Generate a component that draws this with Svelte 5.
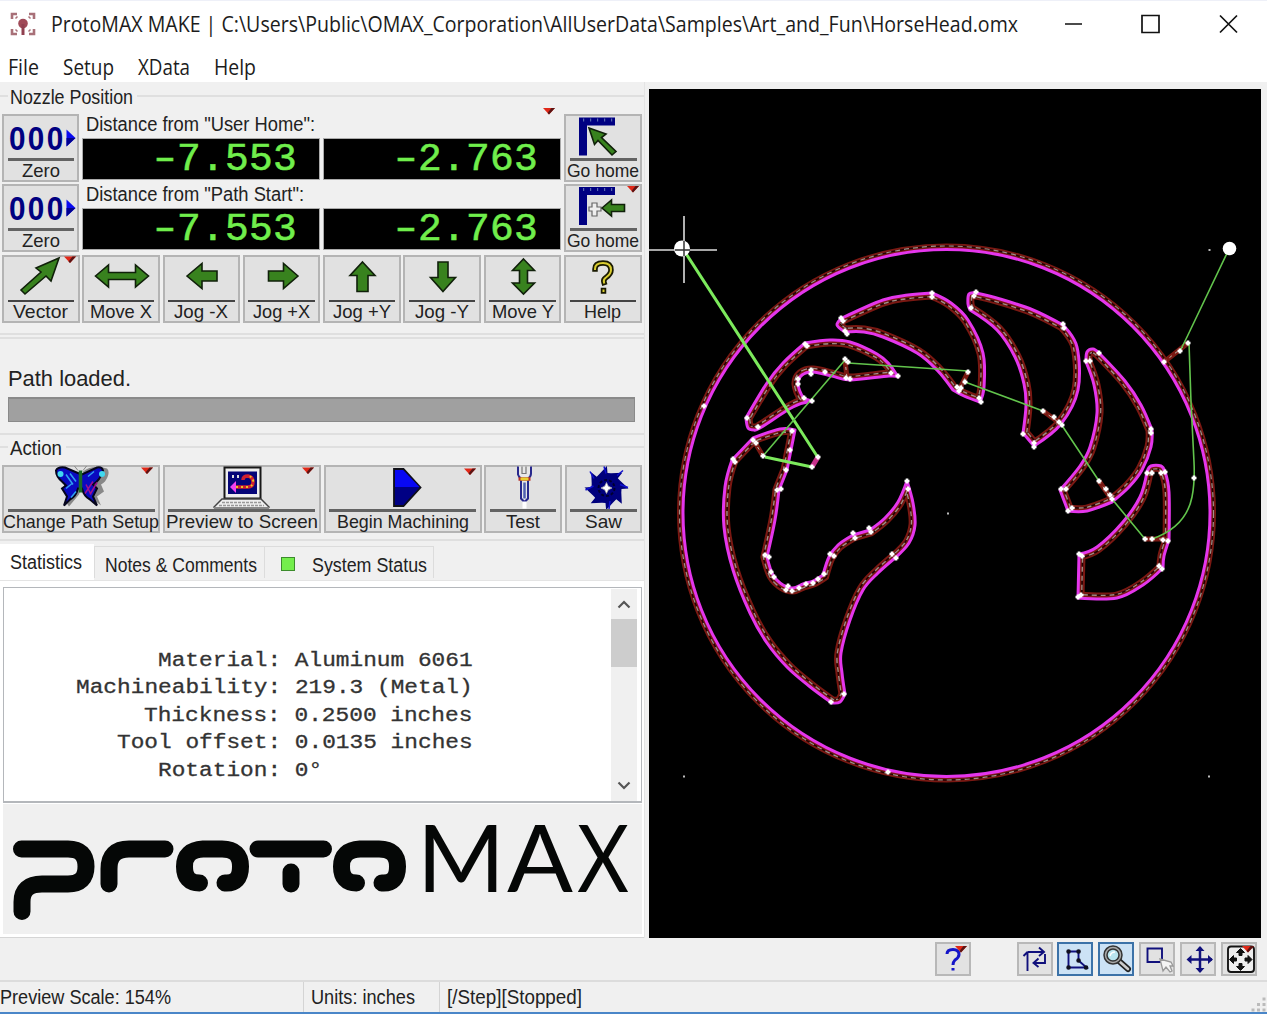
<script>
  const menus = [['File', 31], ['Setup', 51], ['XData', 52], ['Help', 42]];

  const jogs = [
    { id: 'vector', text: 'Vector', w: 55, x: 2 },
    { id: 'movex', text: 'Move X', w: 62, x: 82 },
    { id: 'left', text: 'Jog -X', w: 54, x: 163 },
    { id: 'right', text: 'Jog +X', w: 57, x: 243 },
    { id: 'up', text: 'Jog +Y', w: 58, x: 323 },
    { id: 'down', text: 'Jog -Y', w: 54, x: 403 },
    { id: 'movey', text: 'Move Y', w: 62, x: 484 },
    { id: 'help', text: 'Help', w: 37, x: 564 }
  ];

  const actions = [
    { id: 'path', text: 'Change Path Setup', w: 156, x: 2, bw: 158 },
    { id: 'preview', text: 'Preview to Screen', w: 152, x: 163, bw: 158 },
    { id: 'begin', text: 'Begin Machining', w: 132, x: 323, bw: 158 },
    { id: 'test', text: 'Test', w: 34, x: 484, bw: 77.5 },
    { id: 'saw', text: 'Saw', w: 37, x: 564, bw: 77.5 }
  ];

  const stats = [
    ['Material: Aluminum 6061', 6],
    ['Machineability: 219.3 (Metal)', 0],
    ['Thickness: 0.2500 inches', 5],
    ['Tool offset: 0.0135 inches', 3],
    ['Rotation: 0°', 6]
  ];

  const tools = [
    { id: 'turn', x: 1017 },
    { id: 'shape', x: 1058, on: true },
    { id: 'zoom', x: 1098, on: true },
    { id: 'select', x: 1139 },
    { id: 'pan', x: 1180 },
    { id: 'fit', x: 1221 }
  ];

  // Eight hooked teeth around the hub of the saw blade.
  const blade = Array.from({ length: 8 }, (_, i) => {
    const at = (r, deg) => {
      const a = ((i * 45 + deg) * Math.PI) / 180;
      return `${(605.5 + r * Math.cos(a)).toFixed(1)},${(487.5 + r * Math.sin(a)).toFixed(1)}`;
    };
    return `${at(15.5, -28)} ${at(22, 1)} ${at(15, 4)}`;
  }).join(' ');

  // Cut outlines: x, y and an optional 1 for a sharp corner.
  const parts = [
    [[805,343,1],[830,340],[850,342],[877,354],[889,364],[898,377,1],[889,376],[850,380],[832,376],[813,372],[802,375],[798,384],[803,397],[812,401,1],[793,407],[760,428],[754,430],[748,428],[746,418,1],[767,383],[783,363]],
    [[932,293,1],[908,295],[883,300],[842,318,1],[837,325],[845,332,1],[864,332],[883,337],[917,353],[937,370],[953,390,1],[964,396],[980,402,1],[984,387],[983,353],[968,320],[951,303]],
    [[976,293,1],[969,294],[968,304],[970,310,1],[997,330],[1015,357],[1024,384],[1026,405],[1023,433,1],[1034,446,1],[1061,424],[1078,390],[1077,347],[1063,325,1],[1033,310],[1000,299]],
    [[1099,353,1],[1093,349],[1087,352],[1086,362,1],[1094,385],[1097,413],[1090,447],[1080,466],[1060,490,1],[1068,511,1],[1087,511],[1112,502,1],[1129,487],[1142,470],[1151,447],[1152,430,1],[1141,405],[1125,381]],
    [[1147,472,1],[1151,466],[1161,466],[1165,472,1],[1169,492],[1169,540,1],[1164,556],[1163,568,1],[1143,585],[1117,598],[1078,598,1],[1079,554,1],[1097,547],[1123,522],[1140,497]],
    [[795,430,1],[780,429],[753,438,1],[732,460,1],[725,487],[724,527],[733,570],[750,613],[767,643],[787,667],[809,686],[832,703,1],[840,702],[845,694,1],[842,673],[841,653],[850,620],[863,590],[878,573],[895,558,1],[909,543],[915,525],[913,503],[907,481,1],[898,502],[885,518],[870,530,1],[853,535,1],[838,545],[829,557],[823,575,1],[813,581],[803,584],[793,588],[783,585],[773,575],[767,557,1],[775,520],[779,490,1],[787,470,1]]
  ];

  const nodes = [
    [805,344],[807,346],[898,376],[891,373],[846,378],[850,379],[825,372],[811,370],[811,374],[798,379],[798,384],[804,398],[812,401],[747,418],[758,427],[845,359],[848,362],
    [932,293],[932,297],[841,318],[843,321],[845,331],[847,334],[957,387],[959,391],[961,388],[979,398],[981,402],[968,372],[965,382],
    [976,292],[974,296],[971,308],[1063,324],[1064,328],[1043,411],[1054,417],[1059,422],[1062,425],[1023,434],[1034,443],[1034,447],
    [1099,353],[1086,361],[1090,361],[1151,429],[1151,433],[1061,489],[1066,489],[1068,511],[1072,508],[1099,481],[1106,489],[1110,495],[1112,499],
    [1147,473],[1152,473],[1161,473],[1165,472],[1145,539],[1152,539],[1163,540],[1168,541],[1159,566],[1162,569],[1079,554],[1082,556],[1078,597],[1081,595],
    [753,440],[756,443],[733,459],[735,462],[763,456],[792,431],[790,450],[786,470],[777,490],[781,489],[818,457],[812,467],[765,555],[769,557],[771,572],[774,577],
    [786,590],[788,586],[792,591],[799,588],[806,584],[813,583],[818,579],[824,574],[830,554],[834,556],[853,533],[855,538],[869,528],[871,532],[907,481],[908,489],[892,554],[896,558],[831,702],[844,694],
    [888,772],[704,406],[1164,362],[1180,351],[1188,343],[1194,478]
  ];

  function smooth(pts) {
    const n = pts.length;
    const tan = (i) => {
      const p = pts[(i + n) % n];
      if (p[2]) return [0, 0];
      const a = pts[(i - 1 + n) % n];
      const b = pts[(i + 1) % n];
      return [(b[0] - a[0]) / 6, (b[1] - a[1]) / 6];
    };
    let d = `M${pts[0][0]} ${pts[0][1]}`;
    for (let i = 0; i < n; i++) {
      const p = pts[i];
      const q = pts[(i + 1) % n];
      const u = tan(i);
      const v = tan((i + 1) % n);
      d += `C${p[0] + u[0]} ${p[1] + u[1]} ${q[0] - v[0]} ${q[1] - v[1]} ${q[0]} ${q[1]}`;
    }
    return d + 'Z';
  }
  const outlines = parts.map(smooth);
</script>

{#snippet label(text, w, size = 19, cls = 'ui')}
  <svg class="label {cls}" width={w} height="20"><text x="0" y="16" textLength={w} lengthAdjust="spacingAndGlyphs" font-size={size}>{text}</text></svg>
{/snippet}

{#snippet marker(x, y)}
  <path d="M{x} {y}h12l-6 6.5z" fill="#e02818" /><path d="M{x + 12} {y}l-6 6.5l-1.5 -1.5l4 -5z" fill="#5a1414" />
{/snippet}

{#snippet ruler(y)}
  <path d="M579 {y}h36v8h-28v30h-8z" fill="#000082" />
  <path d="M583 {y + 2.5}h30" stroke="#5868b0" stroke-width="3" stroke-dasharray="1.2 5.8" />
{/snippet}

{#snippet zeroButton()}
  <button class="cell">
    <svg class="zero" width="76" height="44">
      <text x="6.6 27.6 48.6" y="35" transform="scale(.9 1)">000</text>
      <path d="M63.500 14.500l9 8.500l-9 8.500z" fill="#0a0af0" /><path d="M63.500 23h9l-9 8.500z" fill="#000090" />
    </svg>
    <i class="rule thick"></i>
    {@render label('Zero', 38)}
  </button>
{/snippet}

{#snippet readouts(title, w)}
  <div class="readouts">
    <div class="caption">{@render label(title, w, 19.5, 'plain')}</div>
    <div class="pair">
      <div class="led"><span class="sign">-</span>7.553</div>
      <div class="led"><span class="sign">-</span>2.763</div>
    </div>
  </div>
{/snippet}

<div class="window">
  <header class="title">
    <svg class="app-icon" width="26" height="26" viewBox="10 11 26 26">
      <g fill="none" stroke="#a87078" stroke-width="2.600">
        <path d="M12 19v-5h5M29 14h5v5M34 29v5h-5M17 34h-5v-5" />
        <path d="M15.500 18.500l2-2M28.500 16.500l2 2M30.500 29.500l-2 2M17.500 31.500l-2-2" stroke-width="1.500" />
      </g>
      <circle cx="23" cy="23.500" r="4.800" fill="#a04a58" /><path d="M23 24v11" stroke="#904050" stroke-width="3" />
    </svg>
    {@render label('ProtoMAX MAKE | C:\\Users\\Public\\OMAX_Corporation\\AllUserData\\Samples\\Art_and_Fun\\HorseHead.omx', 967, 21.5, 'segoe')}
    <svg class="controls" width="190" height="40" viewBox="1058 5 190 40" fill="none" stroke="#111" stroke-width="1.700">
      <path d="M1065 24h17M1142 15.500h17v17h-17zM1220 15.500l17 17M1237 15.500l-17 17" />
    </svg>
  </header>
  <nav>
    {#each menus as [name, w]}{@render label(name, w, 21.5, 'segoe')}{/each}
  </nav>

  <main>
    <section class="side">
      <div class="legend"><i class="stub"></i>{@render label('Nozzle Position', 123, 20, 'plain')}<i class="line"></i></div>
      <div class="positions">
        <svg class="corner-mark" width="14" height="8" viewBox="542 107 14 8">{@render marker(543, 108)}</svg>
        {@render zeroButton()}
        {@render readouts('Distance from "User Home":', 229)}
        <button class="cell">
          <svg width="76" height="44" viewBox="565 115 76 44">
            {@render ruler(117.5)}
            <path d="M589 128l17 6-4.500 3.500 14.500 14-4 3.500-14-14.500-3.500 4z" class="arrow" />
          </svg>
          <i class="rule thick"></i>{@render label('Go home', 72)}
        </button>
        {@render zeroButton()}
        {@render readouts('Distance from "Path Start":', 218)}
        <button class="cell">
          <svg width="76" height="44" viewBox="565 186 76 44">
            {@render ruler(188)}
            <path d="M592 204h5v4h4v4h-4v5h-5v-5h-3v-4h3z" fill="#eee" stroke="#666" stroke-width="1.200" />
            <path d="M602 209l9.500-8v4.500h13v7h-13v4.500z" class="arrow" />
            {@render marker(627, 187)}
          </svg>
          <i class="rule thick"></i>{@render label('Go home', 72)}
        </button>
      </div>
      <div class="buttons jogs">
        {#each jogs as b}
          <button class="cell">
            <svg width="76" height="44" viewBox="{b.x + 1} 256 76 44">
              {#if b.id === 'vector'}
                <path d="M59 258l-8 23-5-5-21 18-4-4 20-18-5-4z" class="arrow" />
                {@render marker(64, 256.500)}
              {:else if b.id === 'movex'}
                <path d="M95.500 276l13-11v7.500h27v-7.500l13 11-13 11v-7.500h-27v7.500z" class="arrow" />
              {:else if b.id === 'left'}
                <path d="M188 276l15-12.500v7.500h15v10h-15v7.500z" class="arrow" />
              {:else if b.id === 'right'}
                <path d="M298 276l-14.500-12.500v7.500h-15v10h15v7.500z" class="arrow" />
              {:else if b.id === 'up'}
                <path d="M362.500 262l12.500 13.500h-7v16h-11v-16h-7z" class="arrow" />
              {:else if b.id === 'down'}
                <path d="M443 291.500l12.500-14h-7.500v-15.500h-10v15.500h-7.500z" class="arrow" />
              {:else if b.id === 'movey'}
                <path d="M523.500 259l11 11.500h-7v12.500h7l-11 11-11-11h7v-12.500h-7z" class="arrow" />
              {:else}
                <g fill="none" stroke-linecap="square">
                  <path d="M595 269q0-6 8-6t8 7q0 4-5 7.500-3 2-2 5M603.500 290.500v.5" stroke="#1a1a00" stroke-width="5.500" />
                  <path d="M595 269q0-6 8-6t8 7q0 4-5 7.500-3 2-2 5M603.500 290.500v.5" stroke="#d8cc30" stroke-width="2" />
                </g>
              {/if}
            </svg>
            <i class="rule"></i>{@render label(b.text, b.w)}
          </button>
        {/each}
      </div>
      <hr class="first" /><hr class="second-line" />
      <div class="message">{@render label('Path loaded.', 123, 21.5)}</div>
      <div class="progress"></div>
      <hr class="third" />
      <div class="legend action"><i class="stub"></i>{@render label('Action', 52, 20, 'plain')}<i class="line"></i></div>
      <div class="buttons">
        {#each actions as b}
          <button class="cell" style:width="{b.bw}px">
            <svg width={b.bw - 2} height="44" viewBox="{b.x + 1} 465.500 {b.bw - 2} 44">
              {#if b.id === 'path'}
                <path d="M83 471q9-7 24-3q4 4-2 13q-2 2-4 3l3 7-7 5 4 9-10-8-5-8M82 485l-3 9-10 12-2-3 5-7-8-8v-6" fill="#888" />
                <path d="M79 473L65 467q-7-1-9 3 0 6 6 11l4 4-4 3 5 8-3 9 6-6q6-3 8-11h4q2 8 8 11l7 6-4-9 4-8-4-4q7-4 10-14-1-4-6-3l-15 7z" fill="#0a0ac0" stroke="#05051c" stroke-width="2" />
                <path d="M66 474l7 10M70 473l6 8M88 476l6-5M66 488l6-5M71 497l5-6" stroke="#30a0f0" stroke-width="1.500" />
                <circle cx="60.500" cy="473.500" r="3" fill="#40d8f0" /><circle cx="102" cy="473.500" r="3" fill="#40d8f0" />
                <path d="M85 493l8-12M90 494l7-12M86 484l5 10" stroke="#a01090" stroke-width="1.500" />
                <path d="M80.500 470v22" stroke="#1c6c28" stroke-width="3.500" /><path d="M78 470l-4-5M83 470l4-5" stroke="#888" stroke-width="1" />
                {@render marker(141, 467)}
              {:else if b.id === 'preview'}
                <path d="M224.500 467h36v31h-36z" fill="#eee" stroke="#181818" stroke-width="2" />
                <path d="M228 471h29v22.500h-29z" fill="#050578" />
                <path d="M234 486.500h14q5 0 5-5t-5-6q-5 0-5 4" fill="none" stroke="#d02030" stroke-width="3.500" />
                <path d="M236 486.500h12q4 0 5-5t-5-6" fill="none" stroke="#e8c820" stroke-width="2" stroke-dasharray="2 3" />
                <path d="M230 486.500l6-6v12z" fill="#f040f0" /><path d="M232 476h2M237 476h2" stroke="#ddd" stroke-width="3" />
                <path d="M222 498.500h39l8 8-2 3h-51l-2-3z" fill="#eee" stroke="#444" stroke-width="1.500" />
                <path d="M222 502h39M219 505h45" stroke="#999" stroke-width="1.500" stroke-dasharray="3 1" /><path d="M214 508h55" stroke="#888" stroke-width="3" />
                {@render marker(302, 467)}
              {:else if b.id === 'begin'}
                <path d="M393 468.500h9.500l17 18.500-17 18.500h-9.500z" fill="#000084" stroke="#101018" stroke-width="1.800" />
                <path d="M394 469.500h8l16.500 17h-24.500z" fill="#0808f4" />
                {@render marker(463, 468)}
              {:else if b.id === 'test'}
                <path d="M518 466v8q1 3 3 4v20l3.500 3.500 3.500-3.500v-20q3-2 3-5v-7" fill="#e8e8e8" stroke="#28288c" stroke-width="2" />
                <path d="M522 466v7h4v-7" fill="none" stroke="#777" stroke-width="1.200" /><path d="M524.500 482v16" stroke="#5060b0" stroke-width="2.500" />
                <path d="M518.500 478.500h12" stroke="#b83028" stroke-width="3.500" /><path d="M520.500 478.500h8" stroke="#e8d030" stroke-width="3" /><path d="M524.500 501v7" stroke="#fff" stroke-width="4" />
              {:else}
                <polygon points={blade} fill="#00007c" />
                <path d="M589 471l4 7M584.500 489.500l8 -4M622 470l-6 5M627 487l-8-3M608 508.500l1-8M603 466l2 7" stroke="#1010d0" stroke-width="1.500" />
                <circle cx="605.500" cy="487.500" r="8" fill="none" stroke="#000030" stroke-width="2" stroke-dasharray="3 2" />
                <path d="M605.500 482l1.800 3.700 3.700 1.800-3.700 1.800-1.800 3.700-1.800-3.700-3.700-1.800 3.700-1.800z" fill="#fff" stroke="#aaa" stroke-width=".8" />
              {/if}
            </svg>
            <i class="rule thick"></i>{@render label(b.text, b.w, 18.5)}
          </button>
        {/each}
      </div>
      <hr class="fourth" />
      <div class="tabs">
        <div class="tab active">{@render label('Statistics', 72, 19.5, 'plain')}</div>
        <div class="tab notes">{@render label('Notes & Comments', 152, 19.5, 'plain')}</div>
        <div class="tab system"><i class="lamp"></i>{@render label('System Status', 115, 19.5, 'plain')}</div>
      </div>
      <div class="sheet">
        <div class="memo">
          <div class="lines">
            {#each stats as [line, indent]}
              <div class="stat" style:padding-left="{indent * 13.68}px">{@render label(line, line.length * 13.68, 20.5, 'mono')}</div>
            {/each}
          </div>
          <div class="scroll">
            <svg width="26" height="30" viewBox="0 0 26 30"><path d="M7.500 18.500l5.500-5.500 5.500 5.500" /></svg>
            <div class="thumb"></div>
            <svg class="down" width="26" height="30" viewBox="0 0 26 30"><path d="M7.500 11.500l5.500 5.500 5.500-5.500" /></svg>
          </div>
        </div>
        <div class="logo">
          <svg width="639" height="129" viewBox="3 804 639 129">
            <g fill="none" stroke="#050706" stroke-width="17" stroke-linecap="round" stroke-linejoin="round">
              <path d="M21.500 849H68Q86 849 86 866.500T68 884H42Q22 884 22 902V911.500" />
              <path d="M109 884V869Q109 849 129 849H165" />
              {#each [0, 157] as dx}
                <path d="M{199.5 + dx} 883Q{184.5 + dx} 883 {184.5 + dx} 866.500T{203 + dx} 849H{222 + dx}Q{240.5 + dx} 849 {240.5 + dx} 866.500T{225 + dx} 883" />
              {/each}
              <path d="M258 849H323.500M291 872V884" />
            </g>
            <g class="max">
              <text x="417" y="892" textLength="88" lengthAdjust="spacingAndGlyphs">M</text>
              <text x="507" y="892" textLength="66" lengthAdjust="spacingAndGlyphs">A</text>
              <text x="577" y="892" textLength="52" lengthAdjust="spacingAndGlyphs">X</text>
            </g>
          </svg>
        </div>
      </div>
    </section>

    <svg class="canvas" width="612" height="849" viewBox="649 89 612 849">
      <defs>
        {#each outlines as d, i}<clipPath id="part{i}"><path {d} /></clipPath>{/each}
      </defs>
      <g fill="none">
        <circle cx="946.500" cy="513" r="267" stroke="#7a1812" stroke-width="5" />
        <circle cx="946.500" cy="513" r="267" stroke="#200404" stroke-width="1.400" />
        <circle cx="946.500" cy="513" r="267" stroke="#a09088" stroke-width="1.200" stroke-dasharray="5 4" />
        <circle cx="946.500" cy="513" r="263.500" stroke="#e436ec" stroke-width="3" />
        {#each outlines as d, i}
          <g clip-path="url(#part{i})">
            <path {d} stroke="#7a1812" stroke-width="13" />
            <path {d} stroke="#200404" stroke-width="9" />
            <path {d} stroke="#a09088" stroke-width="8.600" stroke-dasharray="5 4" />
            <path {d} stroke="#7a1812" stroke-width="6" />
          </g>
          <path {d} stroke="#e436ec" stroke-width="3" stroke-linejoin="round" />
        {/each}
        <path d="M754 441l9 15M845 360l2 18M968 372l-9 18M1043 411l18 13M1099 481l13 19M1145 539h22M1164 362l24-19" stroke="#7a1812" stroke-width="5" />
        <path d="M754 441l9 15M845 360l2 18M968 372l-9 18M1043 411l18 13M1099 481l13 19M1145 539h22M1164 362l24-19" stroke="#bba" stroke-width="1" stroke-dasharray="3 4" />
        <path d="M818 457l-6 10" stroke="#c8308c" stroke-width="5" />
        <path d="M683 249l134 207M765 457l47 10" stroke="#7cea5c" stroke-width="3" />
        <path d="M763 456l82-96M848 363l120 8M965 382l78 29M1061 424l38 57M1112 499l33 40M1152 539q34-12 40-42q3-15 2-35l-3-60-2-59M1180 351l7-14 42-88" stroke="#62c44c" stroke-width="1.600" />
      </g>
      {#each nodes as [x, y]}<path d="M{x - 2.5} {y}h5M{x} {y - 2.5}v5" class="node" />{/each}
      <circle cx="682" cy="248.500" r="8" fill="#fff" /><circle cx="1229.500" cy="248.500" r="6.800" fill="#fff" />
      <path d="M649 250h68M684 216v67" stroke="#ddd" stroke-width="1.600" /><path d="M675 250h15M684 241v15" stroke="#333" stroke-width="1.400" />
      <path d="M1208.500 250h2M683 776.500h2M1208 776.500h2M947 513.500h2" stroke="#bbb" stroke-width="2" />
    </svg>
  </main>

  <div class="toolbar">
    <button class="tool ask">
      <svg width="34" height="32" viewBox="936 943 34 32">
        <path d="M947 954q0-4.500 6-4.500t6 5q0 3-4 5.500-2 2-2 5M953 968v2.500" fill="none" stroke="#1414c8" stroke-width="3" />{@render marker(955, 946)}
      </svg>
    </button>
    {#each tools as t}
      <button class="tool" class:on={t.on}>
        <svg width="34" height="32" viewBox="{t.x + 1} 943 34 32" fill="none" stroke="#10107c" stroke-width="1.900">
          {#if t.id === 'turn'}
            <path d="M1027.500 971v-19M1023.500 956l4-4M1027.500 952h16M1039 947.500l5 4.500-5 4M1045 954v9h-11M1038.500 958.500l-5 4.500 5 4" />
          {:else if t.id === 'shape'}
            <path d="M1069.500 951v16.500M1069 951.500h10.500v9l8 7h-18" />
            <path d="M1069.500 951.500h.1M1079.500 951.500h.1M1079.500 960.500h.1M1069.500 967.500h.1M1087 967.500h.1" stroke="#101020" stroke-width="4.500" stroke-linecap="round" />
          {:else if t.id === 'zoom'}
            <path d="M1119 961l9 8" stroke="#222" stroke-width="6" stroke-linecap="round" /><path d="M1120 962l8 7" stroke="#ccc" stroke-width="2.600" stroke-linecap="round" />
            <circle cx="1113" cy="955" r="7.500" fill="#b8e4ee" stroke="#333" stroke-width="4.500" /><circle cx="1113" cy="955" r="7.500" stroke="#aaa" stroke-width="1.500" />
            <path d="M1110 956q1-4 5-4" stroke="#fff" stroke-width="1.500" />
          {:else if t.id === 'select'}
            <path d="M1147.500 948.500h14.500v13.500h-14.500z" /><path d="M1160 959l3 12 3-4 4 5 2-1-2-5h3l-2-4z" fill="#f4f4f4" stroke="#999" stroke-width="1.300" />
          {:else if t.id === 'pan'}
            <path d="M1188 959.500h24M1200 947.500v24" stroke-width="2.500" />
            <path d="M1186.500 959.500l5-4.500v9zM1213 959.500l-5-4.500v9zM1200 946l-4.500 5h9zM1200 973l-4.500-5h9z" fill="#10107c" stroke="none" />
          {:else}
            <rect x="1228" y="946.500" width="26" height="25.500" rx="3" fill="#eee" stroke="#151515" />
            <path d="M1240.500 948.500l-4 4h2.500v3h3v-3h2.500zM1240.500 970.500l-4-4h2.500v-3h3v3h2.500zM1229.500 959.500l4-4v2.500h3v3h-3v2.500zM1252 959.500l-4-4v2.500h-3v3h3v2.500z" fill="#111" stroke="#111" stroke-width="1" />
            <g stroke="none">{@render marker(1242, 946)}</g>
          {/if}
        </svg>
      </button>
    {/each}
  </div>

  <footer>
    <div class="scale">{@render label('Preview Scale: 154%', 171, 19.5, 'plain')}</div>
    <div class="units">{@render label('Units: inches', 104, 19.5, 'plain')}</div>
    <div class="state">{@render label('[/Step][Stopped]', 135, 19.5, 'plain')}</div>
    <svg class="grip" width="16" height="16"><path d="M11.500 2h3M6 7.500h3M11.500 7.500h3M.5 13h3M6 13h3M11.500 13h3" stroke="#bbb" stroke-width="3" /></svg>
  </footer>
</div>

<style>
  :global(body) { margin: 0; background: #f0f0f0; }
  * { box-sizing: border-box; }
  .window { width: 1267px; height: 1014px; overflow: hidden; background: #f0f0f0; display: flex; flex-direction: column; border-bottom: 2px solid #4a86c8; }
  svg { display: block; flex: none; }
  .label { overflow: visible; fill: #222; font-family: "Liberation Sans", Arial, sans-serif; }
  .segoe { font-family: "Open Sans", sans-serif; fill: #1c1c1c; }
  .mono { font-family: "Liberation Mono", monospace; fill: #333; stroke: #333; stroke-width: .3px; }
  .title { height: 48px; background: #fff; border-top: 1px solid #eef0f8; display: flex; align-items: flex-start; padding: 0 19px 0 10px; }
  .app-icon { margin-top: 10px; }
  .title .label { margin: 15px 0 0 15px; }
  .controls { margin: 4px 0 0 auto; }
  nav { height: 34px; background: #fff; display: flex; gap: 24px; padding: 11px 8px 0; }

  main { height: 856px; display: flex; align-items: flex-start; }
  .side { width: 645px; height: 856px; display: flex; flex-direction: column; border-right: 1px solid #e4e4e4; }
  .canvas { background: #000; margin: 7px 0 0 4px; }
  .node { stroke: #fff; stroke-width: 2.6; fill: none; }

  .legend { display: flex; align-items: flex-start; height: 32px; padding-top: 6px; gap: 2px; }
  .legend i { height: 2px; margin-top: 7px; background: #dfdfdf; }
  .stub { width: 8px; }
  .line { flex: 1; margin-left: 2px; }
  .positions { position: relative; display: grid; grid-template-columns: 77px 479px 78px; grid-auto-rows: 68px; column-gap: 3px; row-gap: 2px; padding-left: 2px; }
  .corner-mark { position: absolute; left: 542px; top: -7px; }
  button { font: inherit; padding: 0; }
  .cell { height: 68px; background: #e1e1e1; border: 2px solid #b4b4b4; display: flex; flex-direction: column; align-items: center; overflow: visible; margin: 0; }
  .cell > svg:first-child { margin: -1px -2px 0; }
  .rule { display: block; height: 2px; background: #444; width: calc(100% - 7px); flex: none; }
  .rule.thick { height: 3px; background: #636363; margin-top: -1px; }
  .zero text { font: bold 33px "Liberation Sans", sans-serif; fill: #000080; }
  .arrow { fill: #38821e; stroke: #10200a; stroke-width: 1.6; }
  .readouts { padding-top: 1px; }
  .caption { padding-left: 4px; height: 23px; }
  .pair { display: flex; gap: 3px; }
  .led { width: 238px; height: 42px; background: #000; border: 1px solid #aaa; color: #70ee4c; font: 39.5px/41px "Liberation Mono", monospace; letter-spacing: .3px; text-align: right; padding-right: 22px; -webkit-text-stroke: .6px #70ee4c; white-space: pre; }
  .sign { display: inline-block; transform: scaleX(1.45); letter-spacing: 0; }

  .buttons { display: flex; gap: 2.8px; padding-left: 2px; margin-top: 3px; }
  .buttons .cell { flex: none; }
  .jogs .cell { width: 77.5px; }
  hr { border: 0; margin: 0; height: 2px; background: #dfdfdf; flex: none; }
  .first { margin-top: 10px; }
  .second-line { margin-top: 2px; }
  .message { padding: 31px 8px 0; height: 58px; }
  .progress { margin-left: 8px; width: 627px; height: 25px; background: #a0a0a0; border: 1px solid #8a8a8a; border-top-width: 2px; flex: none; }
  .third { margin-top: 11px; }
  .legend.action { height: 28px; padding-top: 4px; }
  .legend.action + .buttons { margin-top: 2px; }
  .fourth { margin-top: 6px; }
  .tabs { display: flex; align-items: flex-end; height: 39px; padding-top: 3px; }
  .tab { height: 32px; border: 1px solid #dcdcdc; border-bottom: 0; display: flex; padding: 8.500px 0 0 10px; margin-bottom: 2px; }
  .tab.active { width: 94px; height: 36px; background: #fff; border: 0; padding: 8.500px 0 0 10px; margin-bottom: 0; }
  .notes { width: 171px; }
  .system { width: 169px; border-left: 0; gap: 17px; padding-left: 16px; }
  .lamp { width: 14px; height: 14px; background: #74ee4c; border: 1px solid #3c8c2c; margin-top: 1px; }
  .sheet { flex: 1; border-top: 1px solid #e4e4e4; border-bottom: 1px solid #d5d5d5; background: #fff; padding: 6px 2px 3px 3px; display: flex; flex-direction: column; gap: 1px; }
  .memo { height: 216px; width: 639px; border: 2px solid #b4b7bb; border-width: 1px 1px 2px; display: flex; justify-content: space-between; padding: 1px 4px 0 72px; flex: none; }
  .lines { padding-top: 61px; }
  .stat { height: 27.4px; }
  .scroll { width: 26px; background: #f0f0f0; display: flex; flex-direction: column; }
  .scroll path { fill: none; stroke: #555; stroke-width: 2.2; }
  .scroll .down { margin-top: auto; }
  .thumb { height: 48px; background: #cdcdcd; }
  .logo { background: #f0f0f0; flex: 1; }
  .max { font: 94px Lato, sans-serif; fill: #050706; }

  .toolbar { height: 42px; display: flex; gap: 4.9px; padding: 4px 10px 0 0; justify-content: flex-end; }
  .tool { width: 36px; height: 34px; background: #e2e2e2; border: 2px solid #b8b8b8; display: flex; }
  .tool svg { margin: -1px; }
  .tool.on { background: #cce2f5; border-color: #3c72a8; }
  .ask { margin-right: 41px; }
  footer { height: 32px; border-top: 2px solid #dcdcdc; display: flex; }
  .scale { width: 303px; padding-top: 6px; }
  .units { width: 136px; }
  .units, .state { border-left: 1px solid #d4d4d4; padding: 6px 0 0 7px; height: 30px; }
  .grip { margin: 15px 0 0 auto; }
</style>
